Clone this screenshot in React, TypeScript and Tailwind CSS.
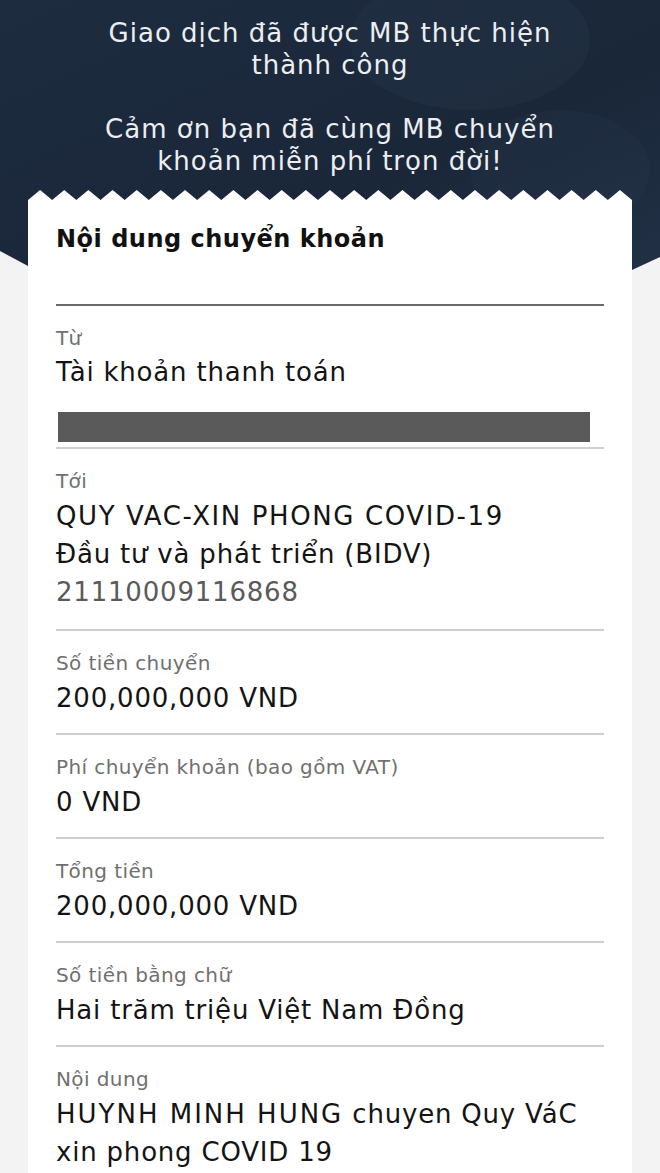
import React from 'react'

const font = { fontFamily: '"DejaVu Sans", "Noto Sans", sans-serif' }

function Teeth() {
  const w = 604
  const n = 25
  const step = w / n
  let pts = `0,10 `
  for (let i = 0; i < n; i++) {
    pts += `${i * step},10 ${i * step + step / 2},0 `
  }
  pts += `${w},10`
  return (
    <svg width={w} height={10} viewBox={`0 0 ${w} 10`} className="block">
      <polygon points={pts} fill="#ffffff" />
    </svg>
  )
}

function Row({ label, children, last, pb = 'pb-[16px]' }: { label: string; children: React.ReactNode; last?: boolean; pb?: string }) {
  return (
    <div className={`pt-[20px] ${pb} ${last ? '' : 'border-b-2 border-[#cfcfcf]'}`}>
      <div className="text-[20px] leading-6 tracking-[0.4px] text-[#707070]">{label}</div>
      <div className="mt-[4px] text-[26px] leading-[38px] tracking-[0.8px] text-[#141414]">{children}</div>
    </div>
  )
}

export default function App() {
  return (
    <div className="relative w-[660px] h-[1173px] overflow-hidden bg-[#f3f3f3]" style={font}>
      {/* dark header background */}
      <svg className="absolute left-0 top-0" width="660" height="300" viewBox="0 0 660 300">
        <defs>
          <linearGradient id="hg" x1="0" y1="0" x2="1" y2="1">
            <stop offset="0" stopColor="#1e2c40" />
            <stop offset="0.6" stopColor="#1a2739" />
            <stop offset="1" stopColor="#223146" />
          </linearGradient>
        </defs>
        <polygon points="0,0 660,0 660,257 632,270 330,290 28,266 0,251" fill="url(#hg)" />
        <ellipse cx="470" cy="40" rx="120" ry="70" fill="#2a3a50" opacity="0.25" />
        <ellipse cx="560" cy="170" rx="90" ry="60" fill="#2b3b51" opacity="0.2" />
      </svg>

      <div className="relative flex flex-col items-center">
        <div className="pt-[17px] text-center text-[26px] leading-[32px] tracking-[1px] text-[#eceef2]">
          <p>Giao dịch đã được MB thực hiện</p>
          <p>thành công</p>
          <p className="mt-[32px]">Cảm ơn bạn đã cùng MB chuyển</p>
          <p>khoản miễn phí trọn đời!</p>
        </div>

        <div className="mt-[13px] w-[604px]">
          <Teeth />
          <div className="bg-white px-[28px] pb-[40px]">
            <div className="pt-[23px] pb-[49px] border-b-2 border-[#6a6a6a] text-[24px] leading-8 font-bold tracking-[0.5px] text-[#111]">
              Nội dung chuyển khoản
            </div>

            <div className="pt-[20px] pb-[5px] border-b-2 border-[#cfcfcf]">
              <div className="text-[20px] leading-6 tracking-[0.4px] text-[#707070]">Từ</div>
              <div className="mt-[3px] text-[26px] leading-[38px] tracking-[0.8px] text-[#141414]">Tài khoản thanh toán</div>
              <div className="mt-[21px] ml-[2px] w-[532px] h-[30px] bg-[#5a5a5a]" />
            </div>

            <Row label="Tới" pb="pb-[18px]">
              <div className="tracking-[1.6px]">QUY VAC-XIN PHONG COVID-19</div>
              <div>Đầu tư và phát triển (BIDV)</div>
              <div className="text-[#5a5a5a]">21110009116868</div>
            </Row>
            <Row label="Số tiền chuyển">200,000,000 VND</Row>
            <Row label="Phí chuyển khoản (bao gồm VAT)">0 VND</Row>
            <Row label="Tổng tiền">200,000,000 VND</Row>
            <Row label="Số tiền bằng chữ">Hai trăm triệu Việt Nam Đồng</Row>
            <Row label="Nội dung" last>
              <div>
                <span className="tracking-[2px]">HUYNH MINH HUNG</span> chuyen Quy VáC
              </div>
              <div>xin phong COVID 19</div>
            </Row>
          </div>
        </div>
      </div>
    </div>
  )
}
